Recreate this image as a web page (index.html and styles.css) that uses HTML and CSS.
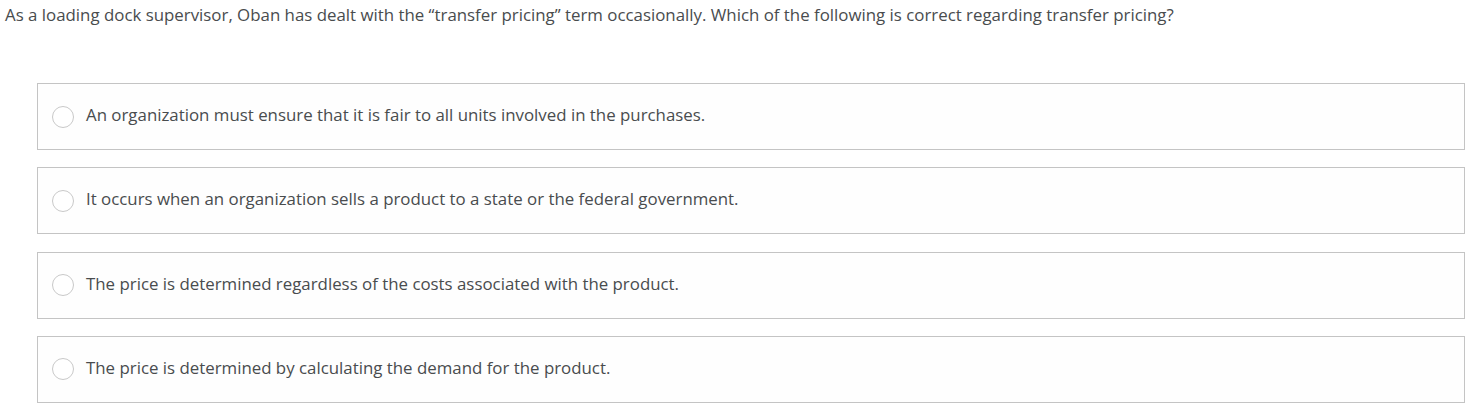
FILE: index.html
```html
<!DOCTYPE html>
<html>
<head>
<meta charset="utf-8">
<link rel="stylesheet" href="styles.css">
</head>
<body>
<div class="question">As a loading dock supervisor, Oban has dealt with the “transfer pricing” term occasionally. Which of the following is correct regarding transfer pricing?</div>
<div class="options">
  <label class="option"><span class="radio"></span><span class="text">An organization must ensure that it is fair to all units involved in the purchases.</span></label>
  <label class="option"><span class="radio"></span><span class="text">It occurs when an organization sells a product to a state or the federal government.</span></label>
  <label class="option"><span class="radio"></span><span class="text">The price is determined regardless of the costs associated with the product.</span></label>
  <label class="option"><span class="radio"></span><span class="text">The price is determined by calculating the demand for the product.</span></label>
</div>
</body>
</html>
```
FILE: styles.css
```css
html, body {
  margin: 0;
  padding: 0;
  background: #ffffff;
}
body {
  font-family: "Open Sans", "Liberation Sans", sans-serif;
  font-size: 16.85px;
  color: #494c4e;
}
.question {
  padding: 3px 0 0 5px;
  line-height: 24px;
}
.options {
  display: flex;
  flex-direction: column;
  gap: 17.33px;
  margin: 56px 16px 0 37px;
}
.option {
  display: flex;
  align-items: center;
  height: 67px;
  box-sizing: border-box;
  border: 1px solid #c4c4c4;
  padding-left: 14px;
  background: #fefefe;
}
.radio {
  width: 22px;
  height: 22px;
  box-sizing: border-box;
  border: 1px solid #c9c9c9;
  border-radius: 50%;
  flex: none;
  background: #fff;
}
.text {
  margin-left: 12px;
  line-height: 24px;
  margin-bottom: 3px;
}
```
